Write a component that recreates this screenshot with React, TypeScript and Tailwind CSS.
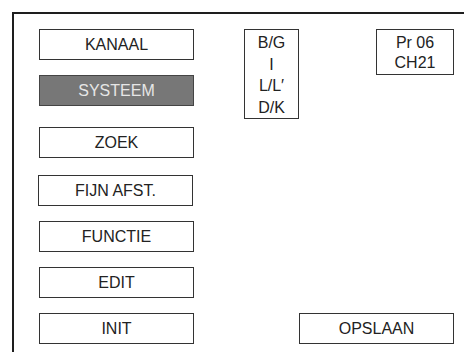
import React from "react";

const Btn = ({ label, active = false, cls = "" }: { label: string; active?: boolean; cls?: string }) => (
  <div
    className={
      "h-[31px] w-[155px] flex items-center justify-center border border-[#333] text-[16px] " +
      (active ? "bg-[#777777] text-[#e6e6e6] border-[#444]" : "bg-white text-[#222]") +
      " " +
      cls
    }
  >
    {label}
  </div>
);

export default function App() {
  return (
    <div
      className="w-[464px] h-[352px] bg-white pl-3 pt-3 overflow-hidden"
      style={{ fontFamily: '"Liberation Sans", Arial, sans-serif' }}
    >
      <div className="h-[360px] w-[470px] border-l-2 border-t-2 border-[#1e1e1e] flex pl-[25px] pt-[15px]">
        <div className="flex flex-col w-[155px]">
          <Btn label="KANAAL" />
          <Btn label="SYSTEEM" active cls="mt-[15px]" />
          <Btn label="ZOEK" cls="mt-[21px]" />
          <Btn label="FIJN AFST." cls="mt-[17px] -ml-px" />
          <Btn label="FUNCTIE" cls="mt-[15px]" />
          <Btn label="EDIT" cls="mt-[15px]" />
          <Btn label="INIT" cls="mt-[15px]" />
        </div>
        <div className="ml-[50px] flex flex-col justify-between h-[315px]">
          <div className="flex items-start">
            <div className="w-[55px] h-[90px] border border-[#333] flex flex-col items-center pt-[2px] text-[16px] leading-[21.5px] text-[#222]">
              <span>B/G</span>
              <span>I</span>
              <span>L/L′</span>
              <span>D/K</span>
            </div>
            <div className="ml-[77px] w-[78px] h-[46px] border border-[#333] flex flex-col items-center pt-[3px] text-[16px] leading-[20px] text-[#222]">
              <span>Pr 06</span>
              <span>CH21</span>
            </div>
          </div>
          <div className="ml-[55px]">
            <Btn label="OPSLAAN" />
          </div>
        </div>
      </div>
    </div>
  );
}
